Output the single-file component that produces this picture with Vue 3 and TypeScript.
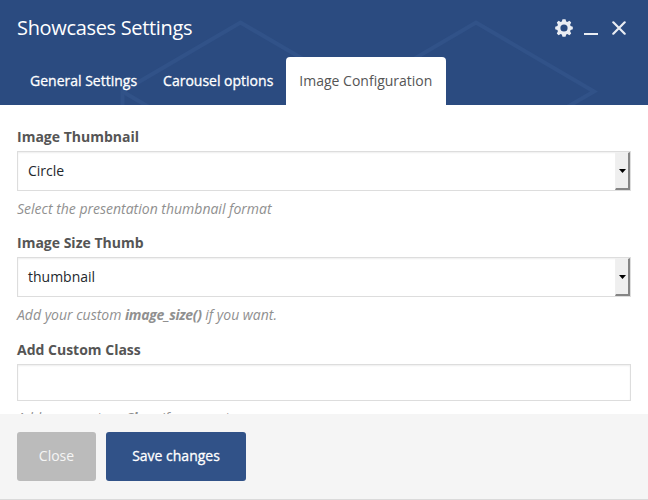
<script setup lang="ts">
import { ref } from 'vue'

const tabs: string[] = ['General Settings', 'Carousel options', 'Image Configuration']
const active = ref<number>(2)

interface SelectField {
  label: string
  value: string
  before: string
  strong: string
  after: string
}

const selects: SelectField[] = [
  { label: 'Image Thumbnail', value: 'Circle', before: 'Select the presentation thumbnail format', strong: '', after: '' },
  { label: 'Image Size Thumb', value: 'thumbnail', before: 'Add your custom ', strong: 'image_size()', after: ' if you want.' },
]
const customClass = ref<string>('')
</script>

<template>
  <div class="modal">
    <header class="head">
      <svg class="pattern" width="648" height="105" viewBox="0 0 648 105" fill="none" stroke="#315288" stroke-width="4">
        <path d="M122.500 110V91.500L240.500 22.500L358.500 91.500L476 22.500L594 91.500L562 110" />
        <path d="M122.500 91.500L154 110" />
      </svg>
      <div class="title-row">
        <h1>Showcases Settings</h1>
        <div class="tools">
          <svg class="gear" width="18" height="18" viewBox="-9 -9 18 18">
            <path fill="#eaedf3" fill-rule="evenodd" d="M-1.500-8.700H1.500L2.200-6.600L3.300-6.100L5.400-7.200L7.200-5.400L6.100-3.200L6.600-2L8.800-1.300V1.300L6.600 2L6.100 3.200L7.200 5.400L5.400 7.200L3.300 6.100L2.200 6.600L1.500 8.700H-1.500L-2.200 6.600L-3.300 6.100L-5.400 7.200L-7.200 5.400L-6.100 3.200L-6.600 2L-8.800 1.300V-1.300L-6.600-2L-6.100-3.200L-7.200-5.400L-5.400-7.200L-3.300-6.100L-2.200-6.600ZM0-3.600A3.600 3.600 0 1 0 0 3.600A3.600 3.600 0 1 0 0-3.600Z" />
          </svg>
          <span class="minimize"></span>
          <svg class="close" width="14" height="14" viewBox="0 0 14 14" stroke="#eaedf3" stroke-width="2.200" stroke-linecap="round">
            <path d="M1.300 1.300L12.700 12.700M12.700 1.300L1.300 12.700" />
          </svg>
        </div>
      </div>
      <nav class="tabs">
        <button v-for="(tab, i) in tabs" :key="tab" type="button" class="tab" :class="{ active: active === i }" @click="active = i">{{ tab }}</button>
      </nav>
    </header>

    <main class="body">
      <div v-for="field in selects" :key="field.label" class="field">
        <label>{{ field.label }}</label>
        <div class="select">
          <span class="value">{{ field.value }}</span>
          <span class="arrow">
            <svg width="7" height="4" viewBox="0 0 7 4"><path d="M0 0H7L3.500 4Z" fill="#000" /></svg>
          </span>
        </div>
        <p>{{ field.before }}<strong>{{ field.strong }}</strong>{{ field.after }}</p>
      </div>
      <div class="field">
        <label>Add Custom Class</label>
        <input v-model="customClass" type="text" />
        <p class="class-hint">Add your custom <strong>Class</strong> if you want.</p>
      </div>
    </main>

    <footer class="foot">
      <button type="button" class="btn cancel">Close</button>
      <button type="button" class="btn save">Save changes</button>
    </footer>
  </div>
</template>

<style>
body {
  margin: 0;
  overflow: hidden;
}
</style>

<style scoped>
.modal {
  width: 648px;
  height: 500px;
  box-sizing: border-box;
  display: flex;
  flex-direction: column;
  border-bottom: 1px solid #dadada;
  background: #fff;
  font-family: 'Open Sans', sans-serif;
  font-size: 14px;
  overflow: hidden;
}
.head {
  position: relative;
  flex: none;
  height: 105px;
  display: flex;
  flex-direction: column;
  justify-content: space-between;
  background: #2b4b80;
}
.pattern {
  position: absolute;
  left: 0;
  top: 0;
}
.title-row {
  position: relative;
  display: flex;
  justify-content: space-between;
  height: 56px;
  padding: 0 22px 0 17px;
  align-items: center;
}
h1 {
  margin: 0;
  font-size: 20px;
  line-height: 28px;
  font-weight: 400;
  letter-spacing: -0.33px;
  color: #fff;
}
.tools {
  display: flex;
  align-items: center;
}
.gear {
  margin-right: 11px;
}
.minimize {
  width: 14px;
  height: 2px;
  margin: 12px 14px 0 0;
  background: #eaedf3;
}
.tabs {
  position: relative;
  display: flex;
  padding-left: 17px;
}
.tab {
  height: 48px;
  padding: 0 13px;
  border: 0;
  border-radius: 4px 4px 0 0;
  background: transparent;
  color: #fff;
  font: 400 14px/20px 'Open Sans', sans-serif;
  -webkit-text-stroke: 0.3px currentColor;
}
.tab.active {
  background: #fff;
  color: #555;
  padding-right: 14px;
  -webkit-text-stroke: 0;
}
.body {
  flex: 1;
  min-height: 0;
  overflow: hidden;
  padding: 22px 17px 0;
}
.field {
  height: 106px;
}
.field + .field + .field {
  padding-top: 1px;
}
label {
  display: block;
  height: 24px;
  line-height: 20px;
  font-weight: 700;
  color: #555;
}
.select,
input {
  display: flex;
  box-sizing: border-box;
  width: 100%;
  height: 40px;
  border: 1px solid #ddd;
  background: #fff;
  box-shadow: inset 0 1px 2px rgba(0, 0, 0, 0.07);
}
input {
  height: 37px;
  padding: 0 10px;
  outline: none;
  font: inherit;
}
.value {
  flex: 1;
  padding-left: 10px;
  line-height: 38px;
  color: #23282d;
}
.arrow {
  box-sizing: border-box;
  width: 15px;
  display: flex;
  align-items: center;
  justify-content: center;
  border: solid;
  border-width: 1px 2px 2px 1px;
  border-color: #f0f0f0 #858585 #858585 #f0f0f0;
  background: #efefef;
}
p {
  margin: 8px 0 0;
  line-height: 20px;
  font-style: italic;
  color: #909090;
}
.class-hint {
  margin-top: 7px;
}
strong {
  font-weight: 700;
  letter-spacing: -0.33px;
}
.foot {
  flex: none;
  height: 85px;
  box-sizing: border-box;
  padding: 18px 17px;
  display: flex;
  gap: 10px;
  background: #f5f5f5;
}
.btn {
  height: 49px;
  padding: 0 0 2px;
  border: 0;
  border-radius: 3px;
  color: #fff;
  font: 400 14px/20px 'Open Sans', sans-serif;
}
.cancel {
  width: 79px;
  background: #bbb;
  color: #f5f5f5;
}
.save {
  width: 140px;
  background: #315288;
  -webkit-text-stroke: 0.3px currentColor;
}
</style>
